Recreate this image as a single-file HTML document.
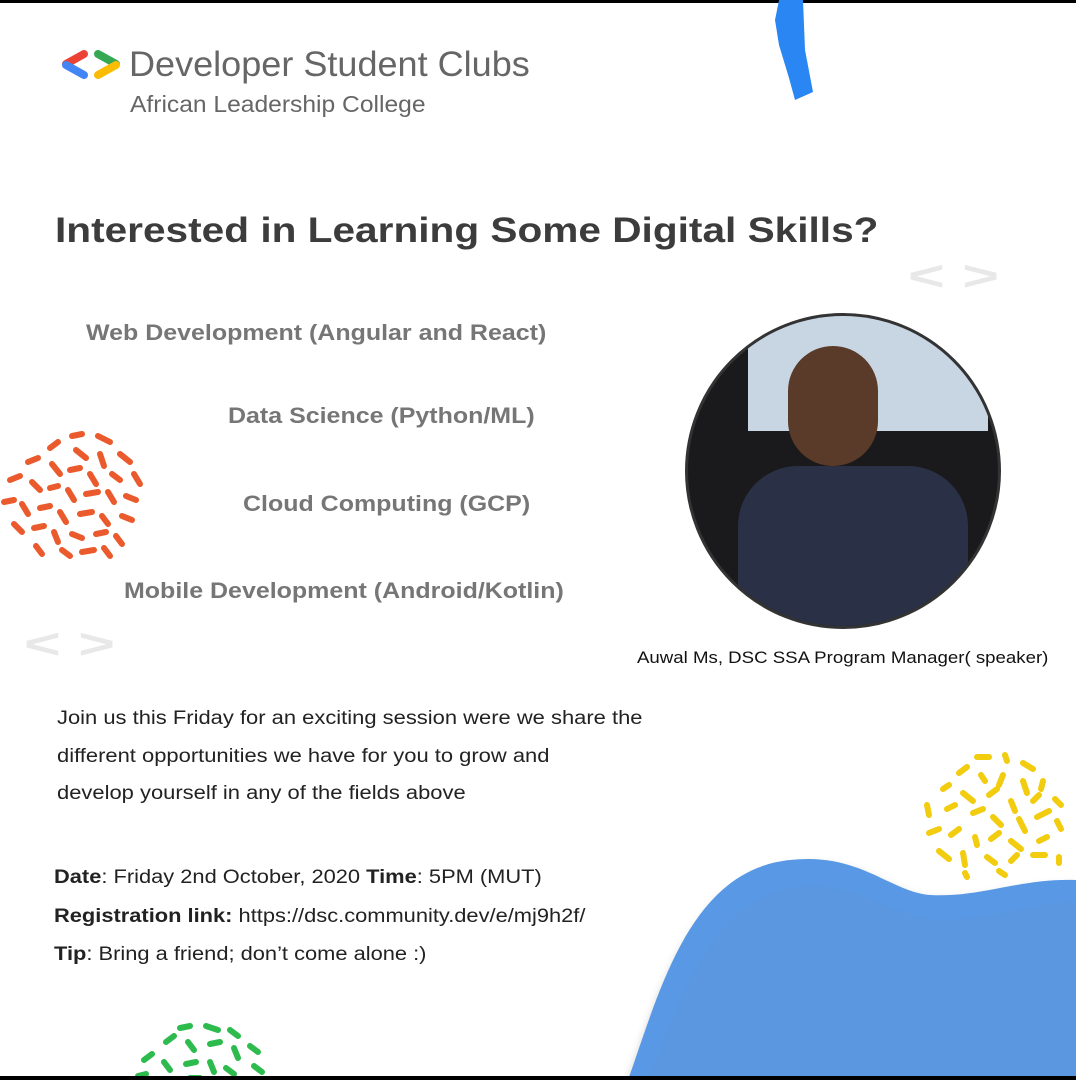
<!DOCTYPE html>
<html><head><meta charset="utf-8"><style>
html,body{margin:0;padding:0}
body{width:1076px;height:1080px;position:relative;overflow:hidden;background:#fff;font-family:"Liberation Sans",sans-serif}
.a{position:absolute;white-space:nowrap;transform-origin:0 0}
.sk{color:#767676;font-weight:bold;font-size:22.5px;transform:scaleX(1.11)}
.bd{color:#222;font-size:19px;transform:scaleX(1.155)}
</style></head><body>
<div class="a" style="left:0;top:0;width:1076px;height:3px;background:#000"></div>
<div class="a" style="left:0;top:1076px;width:1076px;height:4px;background:#000;z-index:5"></div>

<svg class="a" style="left:58px;top:48px" width="66" height="34" viewBox="0 0 66 34">
<g stroke-linecap="round" stroke-width="8" fill="none">
<line x1="26" y1="6" x2="8" y2="16" stroke="#ea4335"/>
<line x1="8" y1="17" x2="26" y2="27" stroke="#4285f4"/>
<line x1="40" y1="6" x2="58" y2="16" stroke="#34a853"/>
<line x1="58" y1="17" x2="40" y2="27" stroke="#fbbc04"/>
</g></svg>
<div class="a" style="left:129px;top:45px;font-size:35px;color:#666;transform:scaleX(1.03)">Developer Student Clubs</div>
<div class="a" style="left:130px;top:91px;font-size:23px;color:#666;transform:scaleX(1.07)">African Leadership College</div>

<svg class="a" style="left:765px;top:0" width="55" height="105"><path d="M14 0 L38 0 L40 50 L48 92 L30 100 L24 78 L14 45 L10 20 Z" fill="#2a86f2"/></svg>

<div class="a" style="left:55px;top:211px;font-size:35px;font-weight:bold;color:#3c3c3c;transform:scaleX(1.16)">Interested in Learning Some Digital Skills?</div>

<div class="a" style="left:908px;top:252px;font-size:42px;color:#e8e8e8;font-weight:bold;transform:scaleX(1.5)">&lt; &gt;</div>
<div class="a" style="left:24px;top:620px;font-size:42px;color:#e8e8e8;font-weight:bold;transform:scaleX(1.5)">&lt; &gt;</div>

<div class="a sk" style="left:86px;top:320px">Web Development (Angular and React)</div>
<div class="a sk" style="left:228px;top:403px">Data Science (Python/ML)</div>
<div class="a sk" style="left:243px;top:491px">Cloud Computing (GCP)</div>
<div class="a sk" style="left:124px;top:578px">Mobile Development (Android/Kotlin)</div>

<svg class="a" style="left:0;top:428px" width="150" height="135" viewBox="0 0 150 135">
<g stroke="#ea5a2c" stroke-width="6" stroke-linecap="round">
<line x1="72" y1="8" x2="82" y2="6"/><line x1="98" y1="8" x2="110" y2="14"/><line x1="50" y1="20" x2="58" y2="14"/><line x1="76" y1="22" x2="86" y2="30"/><line x1="100" y1="26" x2="104" y2="38"/><line x1="120" y1="26" x2="130" y2="34"/>
<line x1="28" y1="34" x2="38" y2="30"/><line x1="52" y1="36" x2="60" y2="46"/><line x1="70" y1="42" x2="80" y2="40"/><line x1="90" y1="46" x2="96" y2="56"/><line x1="112" y1="46" x2="120" y2="52"/><line x1="134" y1="46" x2="140" y2="56"/>
<line x1="10" y1="52" x2="20" y2="48"/><line x1="32" y1="54" x2="40" y2="62"/><line x1="50" y1="60" x2="58" y2="58"/><line x1="68" y1="62" x2="74" y2="72"/><line x1="86" y1="66" x2="98" y2="64"/><line x1="108" y1="64" x2="114" y2="74"/><line x1="126" y1="68" x2="136" y2="72"/>
<line x1="4" y1="74" x2="14" y2="72"/><line x1="22" y1="76" x2="28" y2="86"/><line x1="40" y1="80" x2="50" y2="78"/><line x1="60" y1="84" x2="66" y2="94"/><line x1="80" y1="86" x2="92" y2="84"/><line x1="102" y1="88" x2="108" y2="96"/><line x1="122" y1="88" x2="132" y2="92"/>
<line x1="14" y1="96" x2="22" y2="104"/><line x1="34" y1="100" x2="44" y2="98"/><line x1="54" y1="104" x2="58" y2="114"/><line x1="72" y1="106" x2="82" y2="110"/><line x1="96" y1="106" x2="106" y2="104"/><line x1="116" y1="108" x2="122" y2="116"/>
<line x1="36" y1="118" x2="42" y2="126"/><line x1="62" y1="122" x2="70" y2="128"/><line x1="82" y1="124" x2="94" y2="122"/><line x1="104" y1="120" x2="110" y2="128"/>
</g></svg>

<div class="a" style="left:685px;top:313px;width:310px;height:310px;border-radius:50%;border:3px solid #333;overflow:hidden;background:#1a1a1c">
<div class="a" style="left:60px;top:-5px;width:240px;height:120px;background:#c8d6e4"></div>
<div class="a" style="left:50px;top:150px;width:230px;height:200px;border-radius:60px 60px 0 0;background:#2a3146"></div>
<div class="a" style="left:100px;top:30px;width:90px;height:120px;border-radius:45px;background:#5a3a28"></div>
</div>
<div class="a" style="left:637px;top:649px;font-size:16.5px;color:#111;transform:scaleX(1.13)">Auwal Ms, DSC SSA Program Manager( speaker)</div>

<div class="a bd" style="left:57px;top:700px;line-height:37.5px">Join us this Friday for an exciting session were we share the<br>different opportunities we have for you to grow and<br>develop yourself in any of the fields above</div>

<div class="a bd" style="left:54px;top:859px;line-height:38.5px;transform:scaleX(1.15)"><b>Date</b>: Friday 2nd October, 2020 <b>Time</b>: 5PM (MUT)<br><b>Registration link:</b> https://dsc.community.dev/e/mj9h2f/<br><b>Tip</b>: Bring a friend; don’t come alone :)</div>

<svg class="a" style="left:600px;top:840px" width="476" height="240" viewBox="0 0 476 240">
<defs><filter id="s" x="-10%" y="-10%" width="120%" height="120%"><feGaussianBlur stdDeviation="4"/></filter></defs>
<path d="M28 240 C60 150 90 40 190 25 C260 15 290 55 330 58 C380 62 420 42 476 45 L476 240 Z" fill="#999" opacity="0.4" filter="url(#s)"/>
<path d="M28 240 C60 150 90 30 190 20 C260 12 290 52 330 55 C380 58 420 38 476 40 L476 240 Z" fill="#5898e4"/>
<path d="M48 240 C80 160 110 62 190 48 C260 38 290 78 340 80 C390 80 420 65 476 62 L476 240 Z" fill="#5b97df" opacity="0.9"/>
</svg>

<svg class="a" style="left:915px;top:745px" width="150" height="135" viewBox="0 0 150 135">
<g stroke="#f2cc0f" stroke-width="6" stroke-linecap="round">
<line x1="62" y1="12" x2="74" y2="12"/><line x1="90" y1="10" x2="92" y2="16"/><line x1="108" y1="18" x2="118" y2="24"/><line x1="44" y1="28" x2="52" y2="22"/><line x1="66" y1="30" x2="70" y2="36"/><line x1="88" y1="30" x2="84" y2="40"/><line x1="108" y1="36" x2="112" y2="48"/><line x1="128" y1="36" x2="126" y2="44"/>
<line x1="28" y1="44" x2="34" y2="40"/><line x1="48" y1="48" x2="58" y2="56"/><line x1="74" y1="50" x2="82" y2="44"/><line x1="96" y1="56" x2="100" y2="66"/><line x1="118" y1="56" x2="124" y2="50"/><line x1="140" y1="54" x2="146" y2="60"/>
<line x1="12" y1="60" x2="14" y2="70"/><line x1="32" y1="64" x2="40" y2="60"/><line x1="58" y1="68" x2="68" y2="64"/><line x1="78" y1="72" x2="86" y2="80"/><line x1="104" y1="74" x2="110" y2="86"/><line x1="122" y1="72" x2="134" y2="66"/><line x1="142" y1="76" x2="146" y2="84"/>
<line x1="14" y1="88" x2="24" y2="84"/><line x1="36" y1="90" x2="44" y2="84"/><line x1="60" y1="92" x2="62" y2="100"/><line x1="76" y1="94" x2="84" y2="88"/><line x1="96" y1="96" x2="106" y2="104"/><line x1="124" y1="96" x2="132" y2="92"/>
<line x1="24" y1="106" x2="34" y2="114"/><line x1="48" y1="108" x2="50" y2="120"/><line x1="72" y1="112" x2="80" y2="118"/><line x1="96" y1="116" x2="102" y2="110"/><line x1="118" y1="110" x2="130" y2="110"/><line x1="144" y1="112" x2="144" y2="118"/>
<line x1="50" y1="128" x2="52" y2="132"/><line x1="84" y1="126" x2="90" y2="130"/>
</g></svg>

<svg class="a" style="left:130px;top:1018px" width="150" height="62" viewBox="0 0 150 62">
<g stroke="#2dbb4e" stroke-width="6" stroke-linecap="round">
<line x1="50" y1="10" x2="60" y2="8"/><line x1="76" y1="8" x2="88" y2="12"/><line x1="100" y1="12" x2="108" y2="18"/><line x1="36" y1="24" x2="44" y2="18"/><line x1="58" y1="24" x2="64" y2="32"/><line x1="80" y1="26" x2="90" y2="24"/><line x1="104" y1="30" x2="108" y2="40"/><line x1="120" y1="28" x2="128" y2="34"/>
<line x1="14" y1="42" x2="22" y2="36"/><line x1="34" y1="44" x2="40" y2="52"/><line x1="56" y1="46" x2="66" y2="44"/><line x1="80" y1="44" x2="84" y2="54"/><line x1="96" y1="50" x2="104" y2="56"/><line x1="124" y1="48" x2="132" y2="54"/><line x1="8" y1="58" x2="16" y2="56"/><line x1="60" y1="60" x2="70" y2="60"/>
</g></svg>
</body></html>
